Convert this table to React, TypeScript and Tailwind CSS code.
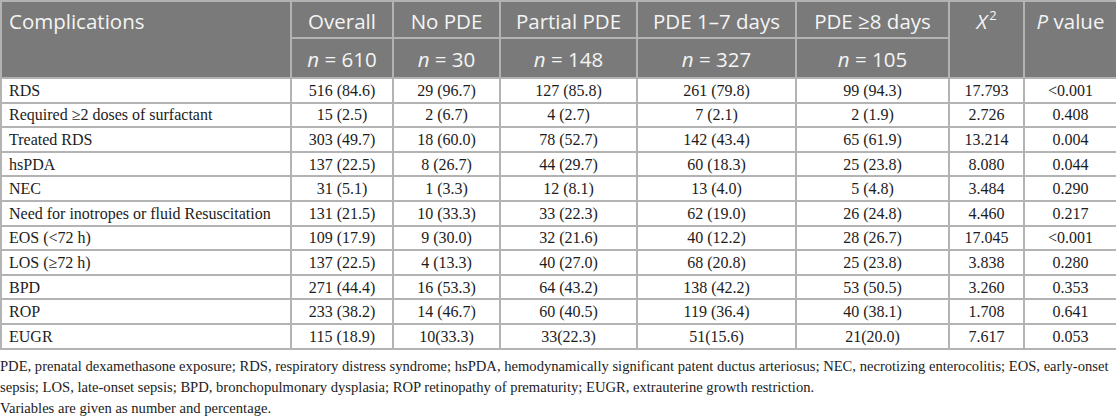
import React from 'react';

type Row = [string, string, string, string, string, string, string, string];

const rows: Row[] = [
    ['RDS', '516 (84.6)', '29 (96.7)', '127 (85.8)', '261 (79.8)', '99 (94.3)', '17.793', '<0.001'],
    ['Required ≥2 doses of surfactant', '15 (2.5)', '2 (6.7)', '4 (2.7)', '7 (2.1)', '2 (1.9)', '2.726', '0.408'],
    ['Treated RDS', '303 (49.7)', '18 (60.0)', '78 (52.7)', '142 (43.4)', '65 (61.9)', '13.214', '0.004'],
    ['hsPDA', '137 (22.5)', '8 (26.7)', '44 (29.7)', '60 (18.3)', '25 (23.8)', '8.080', '0.044'],
    ['NEC', '31 (5.1)', '1 (3.3)', '12 (8.1)', '13 (4.0)', '5 (4.8)', '3.484', '0.290'],
    ['Need for inotropes or fluid Resuscitation', '131 (21.5)', '10 (33.3)', '33 (22.3)', '62 (19.0)', '26 (24.8)', '4.460', '0.217'],
    ['EOS (<72 h)', '109 (17.9)', '9 (30.0)', '32 (21.6)', '40 (12.2)', '28 (26.7)', '17.045', '<0.001'],
    ['LOS (≥72 h)', '137 (22.5)', '4 (13.3)', '40 (27.0)', '68 (20.8)', '25 (23.8)', '3.838', '0.280'],
    ['BPD', '271 (44.4)', '16 (53.3)', '64 (43.2)', '138 (42.2)', '53 (50.5)', '3.260', '0.353'],
    ['ROP', '233 (38.2)', '14 (46.7)', '60 (40.5)', '119 (36.4)', '40 (38.1)', '1.708', '0.641'],
    ['EUGR', '115 (18.9)', '10(33.3)', '33(22.3)', '51(15.6)', '21(20.0)', '7.617', '0.053'],
];

const groups = [
    { label: 'Overall', n: '610' },
    { label: 'No PDE', n: '30' },
    { label: 'Partial PDE', n: '148' },
    { label: 'PDE 1–7 days', n: '327' },
    { label: 'PDE ≥8 days', n: '105' },
];

const th = "border-2 border-[#b3b3b3] font-normal text-[20.5px] leading-[24px] text-[#f4f4f4]";

export default function App() {
    return (
        <div className="w-[1116px] bg-white">
            <table className="w-[1116px] table-fixed border-collapse">
                <colgroup>
                    <col className="w-[290px]" />
                    <col className="w-[102px]" />
                    <col className="w-[107px]" />
                    <col className="w-[137px]" />
                    <col className="w-[159px]" />
                    <col className="w-[153px]" />
                    <col className="w-[75px]" />
                    <col className="w-[93px]" />
                </colgroup>
                <thead className="bg-[#7a7a7a] font-['Open_Sans',sans-serif]">
                    <tr className="h-[37px]">
                        <th rowSpan={2} className={`${th} align-top text-left pl-[7px] pt-[7px]`}>Complications</th>
                        {groups.map(g => (
                            <th key={g.label} className={`${th} align-middle text-center pt-[2px]`}>{g.label}</th>
                        ))}
                        <th rowSpan={2} className={`${th} align-top text-center pt-[7px]`}>
                            <i>X</i><sup className="text-[13px] relative -top-[9px] ml-[2px]">2</sup>
                        </th>
                        <th rowSpan={2} className={`${th} align-top text-center pt-[7px]`}>
                            <i>P</i> value
                        </th>
                    </tr>
                    <tr className="h-[40px]">
                        {groups.map(g => (
                            <th key={g.n} className={`${th} align-middle text-center pt-[2px]`}>
                                <i>n</i> = {g.n}
                            </th>
                        ))}
                    </tr>
                </thead>
                <tbody className="font-['Liberation_Serif',serif] text-[16px] text-[#1c1c1c]">
                    {rows.map(r => (
                        <tr key={r[0]} className="h-[24.6px]">
                            {r.map((c, i) => (
                                <td
                                    key={i}
                                    className={`border-2 border-[#b3b3b3] leading-[19px] py-0 ${i === 0 ? 'text-left pl-[7px]' : 'text-center'}`}
                                >
                                    {c}
                                </td>
                            ))}
                        </tr>
                    ))}
                </tbody>
            </table>
            <div className="mt-[6px] font-['Liberation_Serif',serif] text-[14.6px] leading-[21px] text-[#222] whitespace-nowrap">
                <p>PDE, prenatal dexamethasone exposure; RDS, respiratory distress syndrome; hsPDA, hemodynamically significant patent ductus arteriosus; NEC, necrotizing enterocolitis; EOS, early-onset</p>
                <p>sepsis; LOS, late-onset sepsis; BPD, bronchopulmonary dysplasia; ROP retinopathy of prematurity; EUGR, extrauterine growth restriction.</p>
                <p>Variables are given as number and percentage.</p>
            </div>
        </div>
    );
}
